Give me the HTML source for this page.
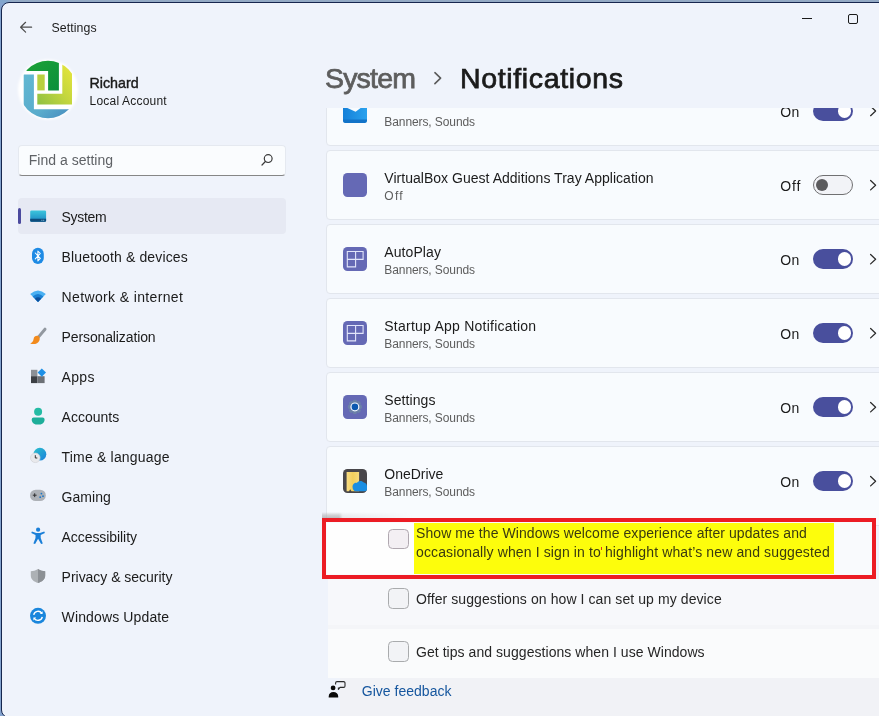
<!DOCTYPE html>
<html lang="en">
<head>
<meta charset="utf-8">
<title>Settings - Notifications</title>
<style>
*{box-sizing:border-box;margin:0;padding:0}
html,body{width:879px;height:716px;overflow:hidden}
body{position:relative;background:#84a3cf;font-family:"Liberation Sans",sans-serif;color:#1b1b1b}
.abs{position:absolute}
#outer-top{left:0;top:0;width:879px;height:3px;background:linear-gradient(90deg,#82a6cd 0,#82a6cd 6px,#93a9c4 12px)}
#win{left:1px;top:2px;width:900px;height:715.6px;background:#eff3fb;border:1.1px solid #16264e;border-radius:8px}
.t{position:absolute;white-space:nowrap;line-height:1;filter:blur(0.3px)}
.card{position:absolute;left:326px;width:580px;height:70px;background:#f8fbfe;border:1px solid #e2e6ed;border-radius:4px}
.tog{position:absolute;left:813px;width:40px;height:20px;border-radius:10px}
.tog.on{background:#494f9d}
.tog.on i{position:absolute;left:24.7px;top:3.4px;width:13.4px;height:13.4px;border-radius:7px;background:#fff}
.tog.off{background:#f2f3f7;border:1px solid #707072}
.tog.off i{position:absolute;left:2.2px;top:3px;width:12px;height:12px;border-radius:6px;background:#5b5b5d}
.ico{position:absolute;left:343px;width:24px;height:24px;border-radius:4.5px;background:#6569b5}
.cb{position:absolute;left:388px;width:20.5px;height:20.8px;border:1.3px solid #a9abad;border-radius:4.5px;background:#f2f3f6}
.row{position:absolute;left:328px;width:560px;background:#f7f9fc}
</style>
</head>
<body>
<div class="abs" id="outer-top"></div>
<div class="abs" id="win"></div>

<!-- title bar -->
<svg class="abs" style="left:18px;top:20px" width="16" height="14" viewBox="18 20 16 14"><path d="M25.6 22.3 L20.6 27.2 L25.6 32.1 M20.8 27.2 H31.6" fill="none" stroke="#4c4c4c" stroke-width="1.2" stroke-linecap="round" stroke-linejoin="round"/></svg>
<div class="t" id="t-settings" style="left:51.4px;top:21.8px;font-size:12.3px;color:#1b1b1b;letter-spacing:0.109px;">Settings</div>

<!-- avatar -->
<svg class="abs" style="left:10px;top:50px" width="80" height="80" viewBox="10 50 80 80">
  <defs>
    <clipPath id="avc"><circle cx="48" cy="89.5" r="28.8"/></clipPath>
    <linearGradient id="gb" x1="0" y1="0" x2="1" y2="1"><stop offset="0" stop-color="#62b8d2"/><stop offset="0.55" stop-color="#5aaccc"/><stop offset="1" stop-color="#3f7fba"/></linearGradient>
    <linearGradient id="gy" x1="1" y1="0" x2="0" y2="1"><stop offset="0" stop-color="#ece83c"/><stop offset="0.5" stop-color="#c4d63e"/><stop offset="1" stop-color="#8ec043"/></linearGradient>
    <linearGradient id="gg" x1="0" y1="0" x2="1" y2="1"><stop offset="0" stop-color="#1ea437"/><stop offset="1" stop-color="#0b8f3b"/></linearGradient>
    <filter id="bl" x="-20%" y="-20%" width="140%" height="140%"><feGaussianBlur stdDeviation="1.2"/></filter>
  </defs>
  <circle cx="48" cy="89.5" r="30" fill="#ffffff" filter="url(#bl)"/>
  <g clip-path="url(#avc)">
    <path d="M20 60 H58.9 V90.4 H48.1 V71 H20 Z" fill="url(#gg)"/>
    <path d="M23.7 74.5 H33.9 V109.2 H80 V120 H23.7 Z" fill="url(#gb)"/>
    <path d="M62.3 60 L66 60 L72 68 V104.6 H37.3 V93.8 H62.3 Z" fill="url(#gy)"/>
    <rect x="37.3" y="74.5" width="7.4" height="15.9" fill="#b9d03f"/>
  </g>
</svg>
<div class="t" id="t-richard" style="left:89.6px;top:75.9px;font-size:14.3px;color:#1b1b1b;letter-spacing:-0.044px;-webkit-text-stroke:0.4px #1b1b1b;">Richard</div>
<div class="t" id="t-local" style="left:89.6px;top:94.9px;font-size:12px;color:#1b1b1b;letter-spacing:0.190px;">Local Account</div>

<!-- search -->
<div class="abs" style="left:18px;top:145px;width:268px;height:31px;background:#fafcfe;border:1px solid #e5e9f0;border-bottom:1.5px solid #868686;border-radius:4px"></div>
<div class="t" id="t-find" style="left:28.8px;top:152.8px;font-size:14px;color:#5f6266;letter-spacing:0.011px;">Find a setting</div>
<svg class="abs" style="left:258px;top:151px" width="18" height="18" viewBox="258 151 18 18"><circle cx="268.2" cy="158.6" r="3.9" fill="none" stroke="#3a3a3a" stroke-width="1.2"/><path d="M265.4 161.5 L262 165" stroke="#3a3a3a" stroke-width="1.2" stroke-linecap="round"/></svg>

<!-- nav -->
<div class="abs" style="left:18px;top:198px;width:268px;height:36px;background:#e6e9f3;border-radius:4px"></div>
<div class="abs" style="left:18px;top:208px;width:3px;height:16px;background:#4b4a9e;border-radius:2px"></div>
<div class="t" id="n0" style="left:61.6px;top:210.1px;font-size:14px;color:#1b1b1b;letter-spacing:-0.338px;">System</div>
<div class="t" id="n1" style="left:61.6px;top:250.1px;font-size:14px;color:#1b1b1b;letter-spacing:0.131px;">Bluetooth &amp; devices</div>
<div class="t" id="n2" style="left:61.6px;top:290.1px;font-size:14px;color:#1b1b1b;letter-spacing:0.360px;">Network &amp; internet</div>
<div class="t" id="n3" style="left:61.6px;top:330.1px;font-size:14px;color:#1b1b1b;letter-spacing:-0.124px;">Personalization</div>
<div class="t" id="n4" style="left:61.6px;top:370.1px;font-size:14px;color:#1b1b1b;letter-spacing:0.293px;">Apps</div>
<div class="t" id="n5" style="left:61.6px;top:410.1px;font-size:14px;color:#1b1b1b;letter-spacing:0.001px;">Accounts</div>
<div class="t" id="n6" style="left:61.6px;top:450.1px;font-size:14px;color:#1b1b1b;letter-spacing:0.184px;">Time &amp; language</div>
<div class="t" id="n7" style="left:61.6px;top:490.1px;font-size:14px;color:#1b1b1b;letter-spacing:0.034px;">Gaming</div>
<div class="t" id="n8" style="left:61.6px;top:530.1px;font-size:14px;color:#1b1b1b;letter-spacing:-0.071px;">Accessibility</div>
<div class="t" id="n9" style="left:61.6px;top:570.1px;font-size:14px;color:#1b1b1b;letter-spacing:-0.026px;">Privacy &amp; security</div>
<div class="t" id="n10" style="left:61.6px;top:610.1px;font-size:14px;color:#1b1b1b;letter-spacing:0.129px;">Windows Update</div>

<!-- nav icons -->
<svg class="abs" style="left:24px;top:200px" width="30" height="430" viewBox="24 200 30 430">
  <defs>
    <linearGradient id="gsys" x1="0" y1="0" x2="0" y2="1"><stop offset="0" stop-color="#3cc6dc"/><stop offset="1" stop-color="#1b86c2"/></linearGradient>
    <linearGradient id="gglobe" x1="0" y1="0" x2="1" y2="1"><stop offset="0" stop-color="#2cc2cc"/><stop offset="1" stop-color="#1a7fdc"/></linearGradient>
    <clipPath id="shr"><rect x="38" y="566" width="10" height="20"/></clipPath>
  </defs>
  <!-- system -->
  <rect x="30.2" y="210.4" width="15.9" height="11.4" rx="1.3" fill="url(#gsys)"/>
  <path d="M30.2 218.8 H46.1 V220.5 a1.3 1.3 0 0 1 -1.3 1.3 H31.5 a1.3 1.3 0 0 1 -1.3 -1.3 Z" fill="#0c4c7c"/>
  <rect x="41.4" y="219.8" width="1" height="0.9" fill="#9fd8f0"/><rect x="43.2" y="219.8" width="1" height="0.9" fill="#9fd8f0"/>
  <!-- bluetooth -->
  <rect x="32" y="247.8" width="11.8" height="16.2" rx="5.9" fill="#1e8ae4"/>
  <path d="M35.3 253 L40.3 258.4 L37.9 260.9 V251 L40.3 253.5 L35.3 258.9" fill="none" stroke="#fff" stroke-width="1.05" stroke-linejoin="round" stroke-linecap="round"/>
  <!-- wifi -->
  <path d="M38 301.9 L30.2 294 Q38 287 45.8 294 Z" fill="#4ab0f2"/>
  <path d="M38 301.9 L32.6 296.4 Q38 291.4 43.4 296.4 Z" fill="#1a7fd2"/>
  <path d="M38 301.9 L34.9 298.7 Q38 295.9 41.1 298.7 Z" fill="#0b4f9c"/>
  <!-- personalization brush -->
  <path d="M45 329.2 L38.2 337.4" stroke="#9298a0" stroke-width="3" stroke-linecap="round"/>
  <path d="M38.4 336 C36.2 335.2 33.9 336.6 33.6 338.9 C33.4 340.9 32.1 342.6 30.2 343.5 C33.5 344.9 38.2 343.9 39.5 340.2 C40 338.6 39.5 336.9 38.4 336 Z" fill="#f28a1c"/>
  <!-- apps -->
  <rect x="31" y="369.8" width="6.4" height="6.4" fill="#8c9096"/>
  <rect x="31" y="376.2" width="6.4" height="6.9" fill="#3c3f44"/>
  <rect x="37.4" y="376.2" width="7.2" height="6.9" fill="#6c7076"/>
  <path d="M41.8 368.4 L46 372.6 L41.8 376.8 L37.6 372.6 Z" fill="#1e90e6"/>
  <!-- accounts -->
  <circle cx="38.1" cy="411.8" r="4" fill="#24bba4"/>
  <path d="M31.7 419.4 a2 2 0 0 1 2 -2 h8.9 a2 2 0 0 1 2 2 c0 3.6 -3 5.2 -6.45 5.2 s-6.45 -1.6 -6.45 -5.2z" fill="#1eae9a"/>
  <!-- time & language -->
  <circle cx="39.9" cy="454.2" r="6.4" fill="url(#gglobe)"/>
  <circle cx="35.3" cy="457.8" r="4.8" fill="#e9e9ec" stroke="#cfcfd4" stroke-width="0.6"/>
  <path d="M35.3 455.2 V458 H37.3" fill="none" stroke="#333" stroke-width="1"/>
  <!-- gaming -->
  <rect x="30" y="489.7" width="15.8" height="11.4" rx="5.7" fill="#adb1b7"/>
  <path d="M32.8 495.2 H36.6 M34.7 493.3 V497.1" stroke="#2e2e30" stroke-width="1"/>
  <circle cx="41.4" cy="493.6" r="0.9" fill="#1e78c8"/><circle cx="43" cy="496.2" r="0.9" fill="#1e78c8"/><circle cx="40.2" cy="497.2" r="0.9" fill="#1e78c8"/>
  <!-- accessibility -->
  <circle cx="38.1" cy="529.7" r="2.1" fill="#1a7fd8"/>
  <path d="M31.9 531.4 L36.3 532.9 H39.9 L44.3 531.4 L44.9 533 L40.7 534.9 V538 L42.8 543.4 L41.1 544.1 L38.1 538.8 L35.1 544.1 L33.4 543.4 L35.5 538 V534.9 L31.3 533 Z" fill="#1a7fd8"/>
  <!-- privacy shield -->
  <path id="shp" d="M38 569.1 C40.5 570.8 43 571.3 45.2 571.3 V575.5 C45.2 579.5 42 581.8 38 582.9 C34 581.8 30.8 579.5 30.8 575.5 V571.3 C33 571.3 35.5 570.8 38 569.1 Z" fill="#adb1b5"/>
  <path d="M38 569.1 C40.5 570.8 43 571.3 45.2 571.3 V575.5 C45.2 579.5 42 581.8 38 582.9 Z" fill="#8c9095"/>
  <!-- update -->
  <circle cx="38" cy="615.8" r="8" fill="#1a86dc"/>
  <path d="M33.7 614.8 A4.5 4.5 0 0 1 41.8 613.2 M42.3 616.8 A4.5 4.5 0 0 1 34.2 618.4" fill="none" stroke="#fff" stroke-width="1.4"/>
  <path d="M42.6 611.2 V614 H39.8 Z M33.4 620.4 V617.6 H36.2 Z" fill="#fff"/>
</svg>

<!-- cards -->
<div class="card" style="top:76px"></div>
<div class="card" style="top:150px"></div>
<div class="card" style="top:224px"></div>
<div class="card" style="top:298px"></div>
<div class="card" style="top:372px"></div>
<div class="card" style="top:446px;height:80px"></div>

<!-- card 0 content (partially hidden) -->
<svg class="abs" style="left:343px;top:100px" width="24" height="24" viewBox="343 100 24 24">
  <defs><linearGradient id="gm" x1="0" y1="0" x2="1" y2="0"><stop offset="0" stop-color="#1580d8"/><stop offset="1" stop-color="#2aa2ee"/></linearGradient></defs>
  <path d="M343 106.1 L355.6 111.8 L367 103.3 V120.6 a2.3 2.3 0 0 1 -2.3 2.3 H345.3 a2.3 2.3 0 0 1 -2.3 -2.3 Z" fill="url(#gm)"/>
  <path d="M343 119.5 H367 V120.6 a2.3 2.3 0 0 1 -2.3 2.3 H345.3 a2.3 2.3 0 0 1 -2.3 -2.3 Z" fill="#1273c8"/>
</svg>
<div class="t" id="o0" style="left:780.3px;top:104.9px;font-size:14px;color:#1b1b1b;letter-spacing:0.312px;">On</div>
<div class="tog on" style="top:101px"><i></i></div>
<svg class="abs" style="left:866px;top:104px" width="13" height="14" viewBox="0 0 13 14"><path d="M4.6 2.3 L9.6 7 L4.6 11.7" fill="none" stroke="#2b2b2b" stroke-width="1.25" stroke-linecap="round" stroke-linejoin="round"/></svg>

<!-- header mask -->
<div class="abs" style="left:300px;top:4px;width:579px;height:104px;background:#eff3fb"></div>
<div class="abs" style="left:802.4px;top:17.6px;width:9.8px;height:1.2px;background:#1a1a1a"></div>
<div class="abs" style="left:848px;top:14px;width:10.4px;height:10.4px;border:1.25px solid #1a1a1a;border-radius:2px"></div>
<div class="t" id="h-sys" style="left:324.9px;top:63.8px;font-size:28.5px;color:#5d5d5d;letter-spacing:-0.766px;-webkit-text-stroke:0.75px #5d5d5d;">System</div>
<svg class="abs" style="left:430px;top:70px" width="14" height="16" viewBox="430 70 14 16"><path d="M434.9 72.7 L440.6 78.2 L434.9 83.7" fill="none" stroke="#5a5a5a" stroke-width="1.6" stroke-linecap="round" stroke-linejoin="round"/></svg>
<div class="t" id="h-not" style="left:460.0px;top:63.8px;font-size:28.5px;color:#1b1b1b;letter-spacing:0.639px;-webkit-text-stroke:0.75px #1b1b1b;">Notifications</div>

<!-- card texts -->
<div class="t" id="s0" style="left:384.3px;top:115.8px;font-size:12px;color:#5d5d5d;letter-spacing:-0.090px;">Banners, Sounds</div>
<div class="t" id="c1" style="left:384.3px;top:171.3px;font-size:14px;color:#1b1b1b;letter-spacing:0.025px;">VirtualBox Guest Additions Tray Application</div>
<div class="t" id="s1" style="left:384.3px;top:189.8px;font-size:12px;color:#5d5d5d;letter-spacing:1.302px;">Off</div>
<div class="t" id="c2" style="left:384.3px;top:245.3px;font-size:14px;color:#1b1b1b;letter-spacing:0.079px;">AutoPlay</div>
<div class="t" id="s2" style="left:384.3px;top:263.8px;font-size:12px;color:#5d5d5d;letter-spacing:-0.090px;">Banners, Sounds</div>
<div class="t" id="c3" style="left:384.3px;top:319.3px;font-size:14px;color:#1b1b1b;letter-spacing:0.239px;">Startup App Notification</div>
<div class="t" id="s3" style="left:384.3px;top:337.8px;font-size:12px;color:#5d5d5d;letter-spacing:-0.090px;">Banners, Sounds</div>
<div class="t" id="c4" style="left:384.3px;top:393.3px;font-size:14px;color:#1b1b1b;letter-spacing:0.087px;">Settings</div>
<div class="t" id="s4" style="left:384.3px;top:411.8px;font-size:12px;color:#5d5d5d;letter-spacing:-0.090px;">Banners, Sounds</div>
<div class="t" id="c5" style="left:384.3px;top:467.3px;font-size:14px;color:#1b1b1b;letter-spacing:-0.020px;">OneDrive</div>
<div class="t" id="s5" style="left:384.3px;top:485.8px;font-size:12px;color:#5d5d5d;letter-spacing:-0.090px;">Banners, Sounds</div>

<!-- card icons -->
<div class="ico" style="top:173px"></div>
<div class="ico" style="top:247px"></div>
<svg class="abs" style="left:343px;top:247px" width="24" height="24" viewBox="343 247 24 24"><path d="M347.3 251.5 H363.1 V259.4 H355.6 V266.9 H347.3 Z M355.6 251.5 V259.4 M347.3 259.4 H355.6" fill="none" stroke="#e2e5fa" stroke-width="1.1"/></svg>
<div class="ico" style="top:321px"></div>
<svg class="abs" style="left:343px;top:321px" width="24" height="24" viewBox="343 247 24 24"><path d="M347.3 251.5 H363.1 V259.4 H355.6 V266.9 H347.3 Z M355.6 251.5 V259.4 M347.3 259.4 H355.6" fill="none" stroke="#e2e5fa" stroke-width="1.1"/></svg>
<div class="ico" style="top:395px"></div>
<svg class="abs" style="left:343px;top:395px" width="24" height="24" viewBox="343 395 24 24">
  <path d="M361.96 405.47 L361.96 408.33 L360.26 409.11 L360.25 409.13 L360.90 410.88 L358.88 412.90 L357.13 412.25 L357.11 412.26 L356.33 413.96 L353.47 413.96 L352.69 412.26 L352.67 412.25 L350.92 412.90 L348.90 410.88 L349.55 409.13 L349.54 409.11 L347.84 408.33 L347.84 405.47 L349.54 404.69 L349.55 404.67 L348.90 402.92 L350.92 400.90 L352.67 401.55 L352.69 401.54 L353.47 399.84 L356.33 399.84 L357.11 401.54 L357.13 401.55 L358.88 400.90 L360.90 402.92 L360.25 404.67 L360.26 404.69 Z" fill="#6c86a6" opacity="0.85"/>
  <circle cx="354.9" cy="406.9" r="4.5" fill="#f4f8ff"/>
  <circle cx="354.9" cy="406.9" r="3.3" fill="#0c58b0"/>
</svg>
<div class="ico" style="top:469px;background:#48464a"></div>
<svg class="abs" style="left:343px;top:469px" width="24" height="24" viewBox="343 469 24 24">
  <defs><linearGradient id="gf" x1="0" y1="0" x2="1" y2="0"><stop offset="0" stop-color="#f8dc84"/><stop offset="0.5" stop-color="#f2cf5c"/><stop offset="1" stop-color="#f6da7c"/></linearGradient></defs>
  <path d="M346.6 472 H359.1 V491.2 H351.5 L350.2 489.2 L349 491.2 H346.6 Z" fill="url(#gf)"/>
  <path d="M352.6 487.5 C352.2 484.5 354.5 482.6 356.8 482.9 C358 480.6 362 480 363.8 482.6 C365.8 482.8 367 484.6 367 486.6 V489 a2.2 2.2 0 0 1 -2.2 2.2 H355.8 C353.8 491.2 352.8 489.4 352.6 487.5 Z" fill="#1a8ee2"/>
</svg>

<!-- toggles -->
<div class="t" id="o1" style="left:780.3px;top:178.9px;font-size:14px;color:#1b1b1b;letter-spacing:0.789px;">Off</div><div class="tog off" style="top:175px"><i></i></div>
<div class="t" id="o2" style="left:780.3px;top:252.9px;font-size:14px;color:#1b1b1b;letter-spacing:0.312px;">On</div><div class="tog on" style="top:249px"><i></i></div>
<div class="t" id="o3" style="left:780.3px;top:326.9px;font-size:14px;color:#1b1b1b;letter-spacing:0.312px;">On</div><div class="tog on" style="top:323px"><i></i></div>
<div class="t" id="o4" style="left:780.3px;top:400.9px;font-size:14px;color:#1b1b1b;letter-spacing:0.312px;">On</div><div class="tog on" style="top:397px"><i></i></div>
<div class="t" id="o5" style="left:780.3px;top:474.9px;font-size:14px;color:#1b1b1b;letter-spacing:0.312px;">On</div><div class="tog on" style="top:471px"><i></i></div>

<!-- chevrons -->
<svg class="abs" style="left:866px;top:170px" width="13" height="320" viewBox="0 0 13 320">
  <g fill="none" stroke="#2b2b2b" stroke-width="1.25" stroke-linecap="round" stroke-linejoin="round">
    <path d="M4.6 10.5 L9.6 15.2 L4.6 19.9"/>
    <path d="M4.6 84.5 L9.6 89.2 L4.6 93.9"/>
    <path d="M4.6 158.5 L9.6 163.2 L4.6 167.9"/>
    <path d="M4.6 232.5 L9.6 237.2 L4.6 241.9"/>
    <path d="M4.6 306.5 L9.6 311.2 L4.6 315.9"/>
  </g>
</svg>

<!-- bottom rows -->
<div class="abs" style="left:322px;top:579px;width:557px;height:137px;background:#eff3fb"></div>
<div class="abs" style="left:322px;top:512px;width:90px;height:6.5px;background:linear-gradient(180deg,rgba(180,180,182,0) 0,rgba(176,176,178,.55) 45%,rgba(170,170,172,.85) 100%);-webkit-mask-image:linear-gradient(90deg,#000 0,#000 19%,rgba(0,0,0,.3) 23%,rgba(0,0,0,0) 100%);mask-image:linear-gradient(90deg,#000 0,#000 19%,rgba(0,0,0,.3) 23%,rgba(0,0,0,0) 100%)"></div>
<div class="abs" style="left:340px;top:678px;width:539px;height:38px;background:#f1f2f6"></div>
<div class="row" style="top:579px;height:99px;background:#f4f5f8"></div>
<div class="row" style="top:579px;height:46px;background:#f7f8fb"></div>
<div class="row" style="top:628.5px;height:49.5px;background:#fafbfc"></div>
<div class="abs" style="left:322.2px;top:518.3px;width:553.9px;height:60.4px;border:4.8px solid #ec1c24;background:#f9fafd"></div>
<div class="abs" style="left:327px;top:523px;width:87px;height:51px;background:#fefefe"></div>
<div class="abs" style="left:414px;top:523px;width:419.8px;height:51px;background:#fdfd0c"></div>
<div class="cb" style="top:528.6px;background:#f3eff3;border-color:#b0a8b0"></div>
<div class="cb" style="top:588.4px"></div>
<div class="cb" style="top:641.4px"></div>
<div class="abs" style="left:600.8px;top:547px;width:1.1px;height:3px;background:#e2341c"></div>
<div class="abs" style="left:518.6px;top:558.2px;width:1.2px;height:1.2px;background:#e2341c"></div>
<div class="t" id="r0a" style="left:416.0px;top:525.6px;font-size:14px;color:#3a3a10;letter-spacing:0.073px;">Show me the Windows welcome experience after updates and</div>
<div class="t" id="r0b" style="left:416.0px;top:545.3px;font-size:14px;color:#3a3a10;letter-spacing:0.120px;">occasionally when I sign in to highlight what’s new and suggested</div>
<div class="t" id="r1" style="left:416.0px;top:591.5px;font-size:14px;color:#262626;letter-spacing:0.087px;">Offer suggestions on how I can set up my device</div>
<div class="t" id="r2" style="left:416.0px;top:645.1px;font-size:14px;color:#262626;letter-spacing:0.053px;">Get tips and suggestions when I use Windows</div>
<svg class="abs" style="left:326px;top:679px" width="24" height="22" viewBox="326 679 24 22">
  <circle cx="333.1" cy="687.9" r="2.4" fill="#0a0a0a"/>
  <path d="M328.7 697.4 V696.4 C328.7 693.6 330.6 692 333.4 692 C336.2 692 338.2 693.6 338.2 696.4 V697.4 Z" fill="#0a0a0a"/>
  <path d="M335.6 684.6 V683 a1.4 1.4 0 0 1 1.4 -1.4 H343.6 a1.4 1.4 0 0 1 1.4 1.4 V686 a1.4 1.4 0 0 1 -1.4 1.4 H340 L338.4 689.4 V687.4" fill="none" stroke="#2a2a2a" stroke-width="1.1" stroke-linejoin="round"/>
</svg>
<div class="t" id="fb" style="left:361.8px;top:684.3px;font-size:14px;color:#15569e;letter-spacing:0.017px;">Give feedback</div>

</body>
</html>
